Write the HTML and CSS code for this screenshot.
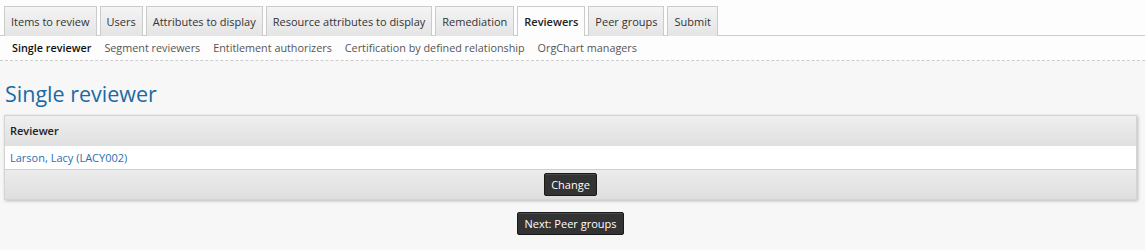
FILE: index.html
```html
<!DOCTYPE html>
<html>
<head>
<meta charset="utf-8">
<link rel="stylesheet" href="styles.css">
</head>
<body>
<div class="top">
  <ul class="tabs">
    <li class="tab">Items to review</li>
    <li class="tab">Users</li>
    <li class="tab">Attributes to display</li>
    <li class="tab">Resource attributes to display</li>
    <li class="tab">Remediation</li>
    <li class="tab active">Reviewers</li>
    <li class="tab">Peer groups</li>
    <li class="tab">Submit</li>
  </ul>
  <ul class="subnav">
    <li class="sub current">Single reviewer</li>
    <li class="sub">Segment reviewers</li>
    <li class="sub">Entitlement authorizers</li>
    <li class="sub">Certification by defined relationship</li>
    <li class="sub">OrgChart managers</li>
  </ul>
</div>
<div class="content">
  <h1 class="title">Single reviewer</h1>
  <div class="panel">
    <div class="panel-head">Reviewer</div>
    <div class="panel-row"><a class="link">Larson, Lacy (LACY002)</a></div>
    <div class="panel-foot"><button class="btn">Change</button></div>
  </div>
  <div class="actions"><button class="btn">Next: Peer groups</button></div>
</div>
</body>
</html>
```
FILE: styles.css
```css
html, body {
  margin: 0;
  padding: 0;
  background: #f7f7f7;
  font-family: "Open Sans", "DejaVu Sans", sans-serif;
  font-size: 11px;
  color: #333;
}
.top {
  background: #fdfdfd;
}
.tabs {
  list-style: none;
  margin: 0;
  padding: 6px 0 0 4px;
  display: flex;
  gap: 3px;
  border-bottom: 1px solid #ccc;
  height: 29px;
}
.tab {
  box-sizing: border-box;
  height: 30px;
  padding: 0 6px;
  border: 1px solid #cbcbcb;
  border-bottom: none;
  background: linear-gradient(#f4f4f4, #e4e4e4);
  color: #333;
  line-height: 29px;
  white-space: nowrap;
}
.tab.active {
  background: #fdfdfd;
  font-weight: 600;
  color: #222;
}
.subnav {
  list-style: none;
  margin: 0;
  padding: 0 0 0 12px;
  display: flex;
  gap: 13px;
  height: 24px;
  line-height: 23px;
  font-size: 10.8px;
  border-bottom: 1px dashed #ccc;
}
.sub {
  color: #555;
  white-space: nowrap;
}
.sub.current {
  color: #111;
  font-weight: 600;
}
.content {
  padding: 0 8px 0 4px;
}
.title {
  margin: 0;
  padding: 18px 0 6px 1px;
  font-weight: 400;
  font-size: 21.5px;
  line-height: 30px;
  color: #1b6aa5;
}
.panel {
  border: 1px solid #d4d4d4;
  box-shadow: 1px 1px 3px rgba(0,0,0,0.25);
  background: #fff;
}
.panel-head {
  height: 30px;
  line-height: 30px;
  padding-left: 5px;
  font-weight: 600;
  font-size: 11px;
  color: #222;
  background: linear-gradient(#efefef, #e0e0e0);
}
.panel-row {
  height: 23px;
  line-height: 23px;
  padding-left: 5px;
  background: #fff;
  border-bottom: 1px solid #cfcfcf;
}
.link {
  color: #2a6fb0;
  font-size: 11px;
}
.panel-foot {
  height: 29px;
  display: flex;
  align-items: center;
  justify-content: center;
  background: linear-gradient(#ececec, #dedede);
}
.btn {
  font-family: "Open Sans", "DejaVu Sans", sans-serif;
  font-size: 11px;
  color: #fff;
  background: #333;
  border: 1px solid #1a1a1a;
  border-radius: 2px;
  height: 23px;
  padding: 0 6px;
  box-shadow: inset 0 1px 0 rgba(255,255,255,0.12);
}
.actions {
  display: flex;
  justify-content: center;
  padding-top: 12px;
}
```
